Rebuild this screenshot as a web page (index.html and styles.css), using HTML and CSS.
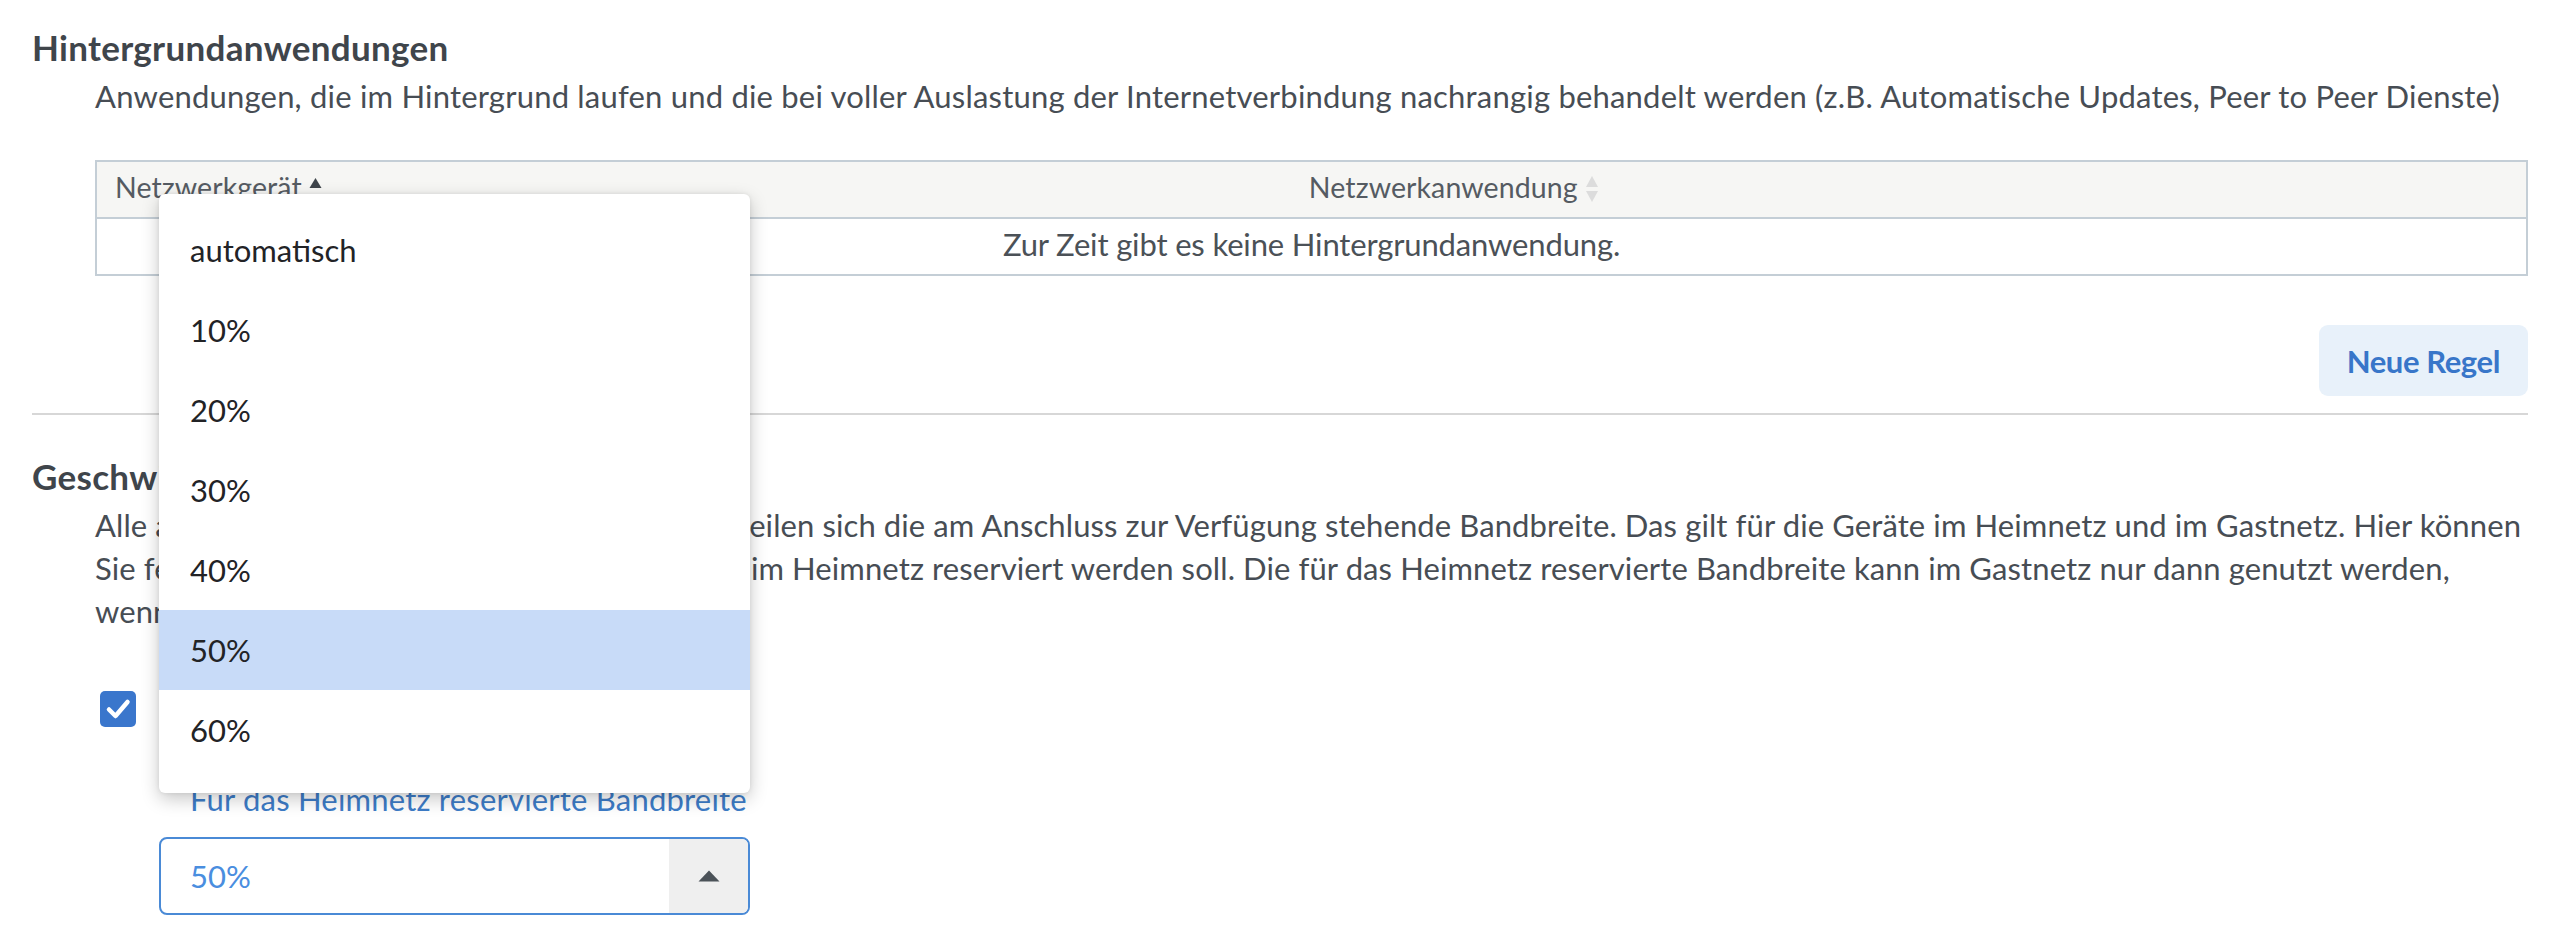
FILE: index.html
```html
<!DOCTYPE html>
<html lang="de">
<head>
<meta charset="utf-8">
<title>Priorisierung</title>
<link rel="stylesheet" href="styles.css">
</head>
<body>
<main class="page">
  <section class="section">
    <h2 class="section-title">Hintergrundanwendungen</h2>
    <p class="section-desc">Anwendungen, die im Hintergrund laufen und die bei voller Auslastung der Internetverbindung nachrangig behandelt werden (z.B. Automatische Updates, Peer to Peer Dienste)</p>
    <div class="table">
      <div class="thead">
        <div class="th th-device">Netzwerkgerät <span class="sort sort-asc"><svg width="13" height="12" viewBox="0 0 13 12"><path d="M6.5 1 L12.5 11 L0.5 11 Z" fill="#3f454b"/></svg></span></div>
        <div class="th th-app">Netzwerkanwendung <span class="sort sort-both"><svg width="14" height="28" viewBox="0 0 14 28"><path d="M7 1 L13 12 L1 12 Z" fill="#dcdcdc"/><path d="M1 16 L13 16 L7 27 Z" fill="#dcdcdc"/></svg></span></div>
      </div>
      <div class="empty-row">Zur Zeit gibt es keine Hintergrundanwendung.</div>
    </div>
    <div class="actions">
      <button class="btn-secondary" type="button">Neue Regel</button>
    </div>
  </section>

  <hr class="divider">

  <section class="section">
    <h2 class="section-title">Geschwindigkeit für das Heimnetz</h2>
    <p class="section-desc section-desc-lines">Alle an die FRITZ!Box angeschlossenen Geräte teilen sich die am Anschluss zur Verfügung stehende Bandbreite. Das gilt für die Geräte im Heimnetz und im Gastnetz. Hier können<br>Sie festlegen, wie viel Bandbreite für die Geräte im Heimnetz reserviert werden soll. Die für das Heimnetz reservierte Bandbreite kann im Gastnetz nur dann genutzt werden,<br>wenn sie im Heimnetz nicht benötigt wird.</p>

    <label class="check-row">
      <span class="checkbox"><svg width="36" height="36" viewBox="0 0 36 36"><path d="M9 18.5 L15.5 25 L27.5 11" fill="none" stroke="#fff" stroke-width="4.5" stroke-linecap="round" stroke-linejoin="round"/></svg></span>
      <span class="check-label">Bandbreite reservieren</span>
    </label>

    <div class="field">
      <div class="field-label">Für das Heimnetz reservierte Bandbreite</div>
      <div class="select-wrap">
        <div class="select">
          <span class="select-value">50%</span>
          <span class="select-toggle"><svg width="22" height="12" viewBox="0 0 22 12"><path d="M11 0.5 L21.5 11.5 L0.5 11.5 Z" fill="#4b5258"/></svg></span>
        </div>
        <ul class="dropdown">
          <li class="option">automatisch</li>
          <li class="option">10%</li>
          <li class="option">20%</li>
          <li class="option">30%</li>
          <li class="option">40%</li>
          <li class="option option-selected">50%</li>
          <li class="option">60%</li>
          <li class="option">70%</li>
          <li class="option">80%</li>
          <li class="option">90%</li>
        </ul>
      </div>
    </div>
  </section>
</main>
</body>
</html>
```
FILE: styles.css
```css
* { box-sizing: border-box; }

html, body {
  margin: 0;
  padding: 0;
  background: #ffffff;
}

body {
  font-family: "Lato", "Open Sans", sans-serif;
  color: #474d54;
  font-size: 31px;
  line-height: 43px;
  letter-spacing: 0.2px;
}

.page {
  padding: 23px 34px 0 32px;
}

.section-title {
  margin: 0;
  font-size: 35px;
  line-height: 48px;
  font-weight: 700;
  color: #3f454b;
  letter-spacing: 0.3px;
}

.section-desc {
  margin: 4px 0 0 63px;
}

.section-desc-lines {
  white-space: nowrap;
  letter-spacing: 0.1px;
}

.table {
  margin: 42px 0 0 63px;
  border: 2px solid #c4ced6;
}

.thead {
  display: grid;
  grid-template-columns: 285px 1fr;
  height: 57px;
  background: #f6f6f4;
  border-bottom: 2px solid #c4ced6;
}

.th {
  padding: 0 18px 5px;
  font-size: 28.5px;
  line-height: 50px;
  color: #555b62;
  letter-spacing: 0.1px;
  white-space: nowrap;
}

.th-app {
  text-align: center;
}

.sort {
  display: inline-block;
  vertical-align: middle;
  margin-left: 0;
}

.sort-asc svg { display: block; margin-top: -14px; }
.sort-both svg { display: block; margin-top: -4px; }

.empty-row {
  height: 55px;
  padding-bottom: 5px;
  line-height: 50px;
  text-align: center;
  color: #4b5157;
  letter-spacing: -0.15px;
}

.actions {
  display: flex;
  justify-content: flex-end;
  margin-top: 49px;
}

.btn-secondary {
  height: 71px;
  padding: 0 28px;
  border: none;
  border-radius: 9px;
  background: #e8f1fa;
  color: #3876c9;
  font-family: inherit;
  font-size: 31px;
  font-weight: 700;
  letter-spacing: -0.4px;
}

.divider {
  margin: 17px 0 0 0;
  border: none;
  height: 2px;
  background: #d7d7d7;
}

.section + .divider + .section .section-title {
  margin-top: 37px;
}

.check-row {
  display: flex;
  align-items: center;
  gap: 24px;
  height: 43px;
  margin: 54px 0 0 68px;
}

.checkbox {
  width: 36px;
  height: 36px;
  border-radius: 5px;
  background: #3a76cc;
  flex: none;
}

.checkbox svg { display: block; }

.field {
  margin: 48px 0 0 127px;
}

.field-label {
  padding-left: 31px;
  color: #3d7cc7;
}

.select-wrap {
  position: relative;
  width: 591px;
  margin-top: 16px;
}

.select {
  display: flex;
  height: 78px;
  border: 2px solid #4a8ad6;
  border-radius: 8px;
  overflow: hidden;
  background: #fff;
}

.select-value {
  flex: 1;
  padding-left: 29px;
  line-height: 74px;
  color: #4a8edf;
  letter-spacing: 0;
}

.select-toggle {
  width: 79px;
  background: #efefef;
  display: flex;
  align-items: center;
  justify-content: center;
}

.dropdown {
  position: absolute;
  left: 0;
  bottom: calc(100% + 44px);
  width: 591px;
  height: 599px;
  margin: 0;
  padding: 16px 0 0;
  list-style: none;
  background: #fff;
  border-radius: 6px;
  box-shadow: 0 6px 18px rgba(0, 0, 0, 0.22), 0 0 4px rgba(0, 0, 0, 0.08);
  overflow: hidden;
}

.option {
  height: 80px;
  padding-left: 31px;
  line-height: 80px;
  color: #222326;
  letter-spacing: 0;
}

.option-selected {
  background: #c8dbf8;
}
```
